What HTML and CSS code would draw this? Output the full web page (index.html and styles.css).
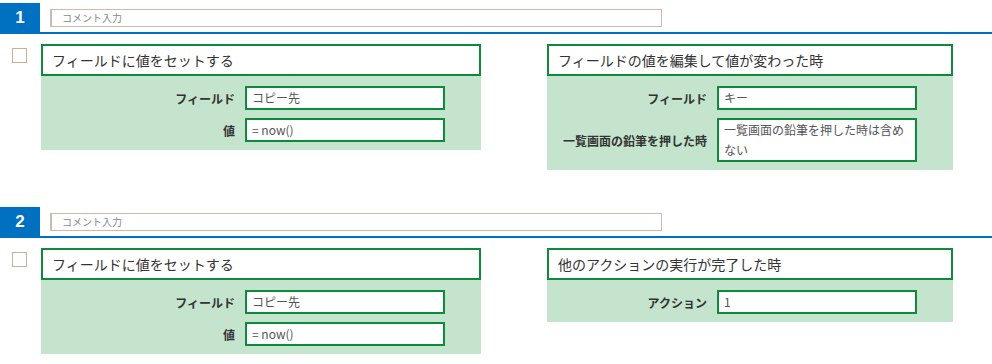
FILE: index.html
```html
<!DOCTYPE html>
<html lang="ja">
<head>
    <meta charset="UTF-8">
    <title>ルール一覧</title>
    <link rel="stylesheet" href="styles.css">
</head>
<body>
<div class="rules">
    <div class="rule">
        <div class="rule-head">
            <div class="rule-no">1</div>
            <div class="comment">コメント入力</div>
        </div>
        <div class="rule-body">
            <span class="check"></span>
            <div class="card card-action">
                <div class="card-title">フィールドに値をセットする</div>
                <div class="card-fields">
                    <div class="field-label">フィールド</div>
                    <div class="field-value">コピー先</div>
                    <div class="field-label">値</div>
                    <div class="field-value">= now()</div>
                </div>
            </div>
            <div class="card card-trigger">
                <div class="card-title">フィールドの値を編集して値が変わった時</div>
                <div class="card-fields">
                    <div class="field-label">フィールド</div>
                    <div class="field-value">キー</div>
                    <div class="field-label">一覧画面の鉛筆を押した時</div>
                    <div class="field-value">一覧画面の鉛筆を押した時は含めない</div>
                </div>
            </div>
        </div>
    </div>

    <div class="rule">
        <div class="rule-head">
            <div class="rule-no">2</div>
            <div class="comment">コメント入力</div>
        </div>
        <div class="rule-body">
            <span class="check"></span>
            <div class="card card-action">
                <div class="card-title">フィールドに値をセットする</div>
                <div class="card-fields">
                    <div class="field-label">フィールド</div>
                    <div class="field-value">コピー先</div>
                    <div class="field-label">値</div>
                    <div class="field-value">= now()</div>
                </div>
            </div>
            <div class="card card-trigger">
                <div class="card-title">他のアクションの実行が完了した時</div>
                <div class="card-fields">
                    <div class="field-label">アクション</div>
                    <div class="field-value">1</div>
                </div>
            </div>
        </div>
    </div>
</div>
</body>
</html>
```

FILE: styles.css
```css
* {
    margin: 0;
    padding: 0;
    box-sizing: border-box;
}

body {
    background: #fff;
    color: #333;
    font-family: "Noto Sans CJK JP", "Noto Sans", sans-serif;
}

.rules {
    padding-top: 3px;
}

.rule + .rule {
    margin-top: 37px;
}

.rule-head {
    display: flex;
    align-items: center;
    border-bottom: 2px solid #0070c0;
}

.rule-no {
    width: 40px;
    height: 29px;
    background: #0070c0;
    color: #fff;
    font-family: "Liberation Sans", sans-serif;
    font-weight: bold;
    font-size: 17px;
    line-height: 30px;
    text-align: center;
}

.comment {
    width: 612px;
    height: 18px;
    margin-left: 10px;
    padding-left: 10px;
    border: 1px solid #cbbba8;
    border-left-width: 2px;
    color: #888;
    font-size: 10px;
    line-height: 16px;
}

.rule-body {
    display: flex;
    align-items: flex-start;
    margin-top: 10px;
    padding-left: 12px;
}

.check {
    width: 15px;
    height: 15px;
    margin-top: 4px;
    margin-right: 14px;
    border: 1px solid #c9b193;
    flex-shrink: 0;
}

.card-action {
    width: 440px;
}

.card-trigger {
    width: 406px;
    margin-left: 66px;
}

.card-title {
    height: 32px;
    padding-left: 9px;
    border: 2px solid #0e8a3c;
    background: #fff;
    font-size: 14px;
    line-height: 29px;
    color: #333;
}

.card-fields {
    display: grid;
    grid-template-columns: 1fr 200px;
    column-gap: 10px;
    row-gap: 8px;
    align-items: center;
    padding: 10px 36px 8px 0;
    background: #c4e4cd;
}

.field-label {
    text-align: right;
    font-size: 12px;
    font-weight: bold;
    color: #333;
}

.field-value {
    min-height: 24px;
    padding: 0 5px;
    border: 2px solid #0e8a3c;
    background: #fff;
    font-size: 12px;
    line-height: 20px;
    color: #555;
}
```
